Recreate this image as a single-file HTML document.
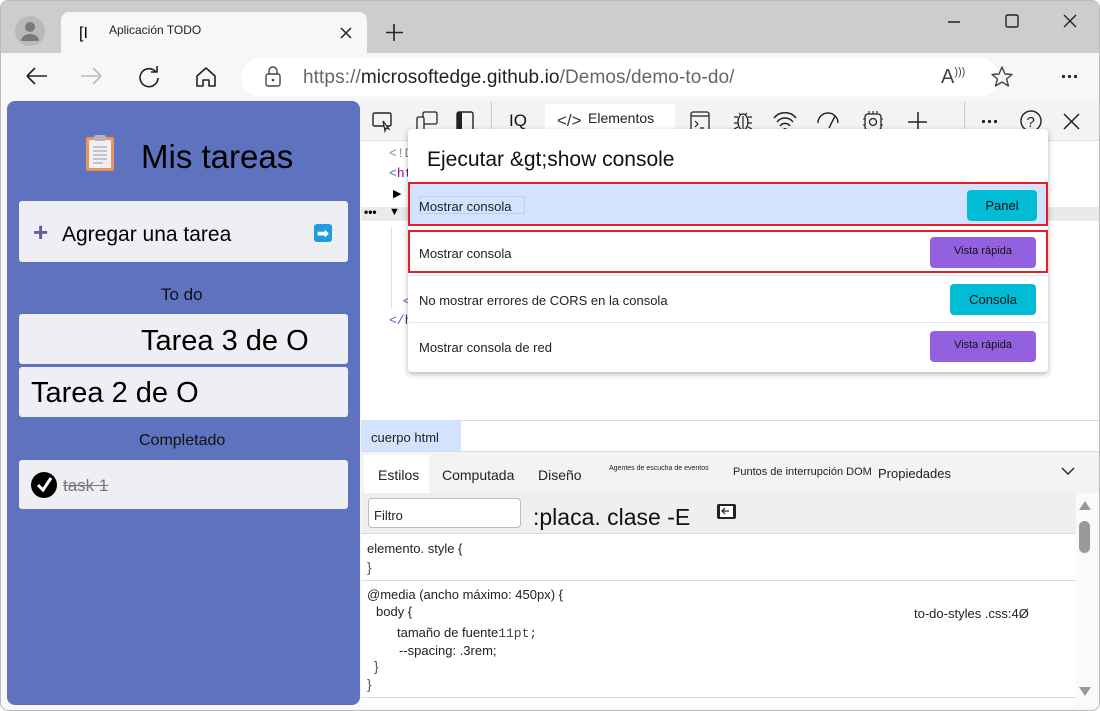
<!DOCTYPE html>
<html><head><meta charset="utf-8"><style>
*{box-sizing:border-box;margin:0;padding:0}
body{width:1100px;height:711px;background:#fff;font-family:"Liberation Sans",sans-serif;position:relative;overflow:hidden}
.a{position:absolute}
.win{left:0;top:0;width:1100px;height:711px;background:#f7f7f7;border:1px solid #bbb;border-radius:8px;overflow:hidden}
.title{left:0;top:0;width:1100px;height:52px;background:#cdcdcd}
.tab{left:60px;top:11px;width:306px;height:41px;background:#f7f7f7;border-radius:8px 8px 0 0}
.addr{left:240px;top:57px;width:758px;height:38px;background:#fff;border-radius:19px}
.panel{left:6px;top:100px;width:353px;height:604px;background:#5f72c0;border-radius:8px}
.card{background:#eeeff3;border-radius:3px;left:18px;width:329px}
.dt{left:360px;top:100px;width:738px;height:606px;background:#fff}
.btn{border-radius:4px;font-size:13px;text-align:center;color:#111}
.row{left:407px;width:640px;font-size:13px;color:#222}
svg{position:absolute;overflow:visible}
</style></head><body>
<div class="a win">
<div class="a title"></div>
<div class="a" style="left:14px;top:15px;width:30px;height:30px;border-radius:50%;background:#b9b9b9"></div>
<svg style="left:14px;top:15px" width="30" height="30"><circle cx="15" cy="11" r="5" fill="#7a7a7a"/><path d="M6 25a9 7 0 0 1 18 0z" fill="#7a7a7a"/></svg>
<div class="a tab"></div>
<div class="a" style="left:78px;top:24px;font-size:16px">[I</div>
<div class="a" style="left:108px;top:22px;font-size:12px;color:#222">Aplicación TODO</div>
<svg style="left:340px;top:27px"><path d="M0 0l10 10M10 0L0 10" stroke="#222" stroke-width="1.5"/></svg>
<svg style="left:385px;top:23px"><path d="M8 0v17M0 8.5h17" stroke="#222" stroke-width="1.6"/></svg>
<svg style="left:947px;top:20px"><path d="M0 1h12" stroke="#222" stroke-width="1.4"/></svg>
<svg style="left:1005px;top:14px"><rect x="0" y="0" width="12" height="12" rx="1.5" fill="none" stroke="#222" stroke-width="1.4"/></svg>
<svg style="left:1063px;top:14px"><path d="M0 0l12 12M12 0L0 12" stroke="#222" stroke-width="1.4"/></svg>
<svg style="left:25px;top:67px"><path d="M1 8h20M1 8l8-8M1 8l8 8" stroke="#222" stroke-width="1.6" fill="none"/></svg>
<svg style="left:80px;top:67px"><path d="M0 8h20M20 8l-8-8M20 8l-8 8" stroke="#bbb" stroke-width="1.6" fill="none"/></svg>
<svg style="left:138px;top:65px"><path d="M17 6A9 9 0 1 0 19 12M18 0v6h-6" stroke="#222" stroke-width="1.6" fill="none"/></svg>
<svg style="left:195px;top:66px"><path d="M1 9L10 1l9 8v10h-6v-6h-6v6H1z" stroke="#222" stroke-width="1.6" fill="none" stroke-linejoin="round"/></svg>
<div class="a addr"></div>
<svg style="left:264px;top:66px"><rect x="1" y="7" width="14" height="12" rx="2" fill="none" stroke="#444" stroke-width="1.4"/><path d="M4 7V4a4 4 0 0 1 8 0v3" fill="none" stroke="#444" stroke-width="1.4"/><circle cx="8" cy="13" r="1.3" fill="#444"/></svg>
<div class="a" style="left:302px;top:66px;font-size:19px;color:#222;letter-spacing:0.1px"><span style="color:#666">https://</span>microsoftedge.github.io<span style="color:#666">/Demos/demo-to-do/</span></div>
<div class="a" style="left:940px;top:65px;font-size:20px;color:#444">A<span style="font-size:11px;vertical-align:top">)))</span></div>
<svg style="left:990px;top:65px"><path d="M11 1l3 7 7 .5-5.5 4.5 2 7L11 16l-6.5 4 2-7L1 8.5 8 8z" fill="none" stroke="#444" stroke-width="1.4" stroke-linejoin="round"/></svg>
<svg style="left:1061px;top:74px"><circle cx="1.5" cy="1.5" r="1.6" fill="#222"/><circle cx="7.5" cy="1.5" r="1.6" fill="#222"/><circle cx="13.5" cy="1.5" r="1.6" fill="#222"/></svg>

<div class="a panel"></div>
<svg style="left:84px;top:134px"><rect x="1" y="2" width="28" height="34" rx="2" fill="#e9955a"/><rect x="4" y="5" width="22" height="28" fill="#f2eef5"/><rect x="9" y="0" width="12" height="6" rx="2" fill="#b9b0b8"/><path d="M8 12h14M8 16h14M8 20h14M8 24h14M8 28h10" stroke="#aaa" stroke-width="1.2"/></svg>
<div class="a" style="left:140px;top:137px;font-size:33px;color:#000">Mis tareas</div>
<div class="a card" style="top:200px;height:61px"></div>
<div class="a" style="left:32px;top:218px;font-size:26px;color:#6a5c9c;font-weight:bold;line-height:26px">+</div>
<div class="a" style="left:61px;top:222px;font-size:21px;color:#000">Agregar una tarea</div>
<div class="a" style="left:313px;top:223px;width:18px;height:18px;background:#1f9bde;border-radius:3px;color:#fff;font-size:14px;text-align:center;line-height:18px;font-weight:bold">➡</div>
<div class="a" style="left:160px;top:284px;font-size:17px;color:#111">To do</div>
<div class="a card" style="top:313px;height:50px"></div>
<div class="a" style="left:140px;top:324px;font-size:29px;color:#000">Tarea 3 de O</div>
<div class="a card" style="top:366px;height:50px"></div>
<div class="a" style="left:30px;top:376px;font-size:29px;color:#000">Tarea 2 de O</div>
<div class="a" style="left:138px;top:431px;font-size:16px;color:#111">Completado</div>
<div class="a card" style="top:459px;height:49px"></div>
<div class="a" style="left:30px;top:471px;width:26px;height:26px;border-radius:50%;background:#000"></div>
<svg style="left:30px;top:471px"><path d="M7 13l5 5 8-12" stroke="#fff" stroke-width="3" fill="none"/></svg>
<div class="a" style="left:62px;top:475px;font-size:17px;color:#777;text-decoration:line-through">task 1</div>

<div class="a dt"></div>
<div class="a" style="left:360px;top:100px;width:738px;height:40px;background:#f3f3f3;border-bottom:1px solid #ddd"></div>
<div class="a" style="left:544px;top:103px;width:130px;height:37px;background:#fff"></div>
<svg style="left:372px;top:112px"><rect x="0" y="0" width="18" height="13" rx="1.5" fill="none" stroke="#222" stroke-width="1.4"/><path d="M10 8l6 8-3-1-1 3z" fill="#fff" stroke="#222" stroke-width="1.2"/></svg>
<svg style="left:416px;top:111px"><rect x="6" y="0" width="14" height="12" rx="1.5" fill="none" stroke="#222" stroke-width="1.3"/><rect x="0" y="5" width="7" height="13" rx="1.5" fill="#f3f3f3" stroke="#222" stroke-width="1.3"/></svg>
<svg style="left:456px;top:111px"><rect x="0" y="0" width="16" height="19" rx="2" fill="none" stroke="#222" stroke-width="1.4"/><rect x="0" y="0" width="5" height="19" fill="#222"/></svg>
<div class="a" style="left:490px;top:100px;width:1px;height:30px;background:#ccc"></div>
<div class="a" style="left:508px;top:110px;font-size:17px;color:#111">IQ</div>
<div class="a" style="left:556px;top:110px;font-size:17px;color:#333">&lt;/&gt;</div>
<div class="a" style="left:587px;top:109px;font-size:14px;color:#222">Elementos</div>
<svg style="left:690px;top:111px"><rect x="0" y="0" width="18" height="19" rx="2" fill="none" stroke="#222" stroke-width="1.3"/><path d="M0 4h18M4 9l3 3-3 3M9 16h4" stroke="#222" stroke-width="1.2" fill="none"/></svg>
<svg style="left:733px;top:110px"><ellipse cx="9" cy="11" rx="5" ry="8" fill="none" stroke="#222" stroke-width="1.3"/><path d="M0 6h4M14 6h4M0 12h4M14 12h4M0 18l4-2M18 18l-4-2M5 2l2 2M13 2l-2 2M9 5v14" stroke="#222" stroke-width="1.2"/></svg>
<svg style="left:773px;top:112px"><path d="M0 5a14 14 0 0 1 22 0M3 9a10 10 0 0 1 16 0M6 13a6 6 0 0 1 10 0" stroke="#222" stroke-width="1.5" fill="none"/><circle cx="11" cy="17" r="2" fill="#222"/></svg>
<svg style="left:816px;top:112px"><path d="M1 10a10 10 0 0 1 20 0M12 15l6-12" stroke="#222" stroke-width="1.4" fill="none"/></svg>
<svg style="left:862px;top:110px"><rect x="2" y="3" width="16" height="16" rx="3" fill="none" stroke="#222" stroke-width="1.3"/><circle cx="10" cy="11" r="3.5" fill="none" stroke="#222" stroke-width="1.3"/><path d="M6 0v3M10 0v3M14 0v3M6 19v3M10 19v3M14 19v3M0 8h2M0 14h2M18 8h2M18 14h2" stroke="#222" stroke-width="1.1"/></svg>
<svg style="left:907px;top:111px"><path d="M10 0v19M0 10h19" stroke="#222" stroke-width="1.5"/></svg>
<div class="a" style="left:963px;top:100px;width:1px;height:30px;background:#ccc"></div>
<svg style="left:981px;top:119px"><circle cx="1.5" cy="1.5" r="1.6" fill="#222"/><circle cx="7.5" cy="1.5" r="1.6" fill="#222"/><circle cx="13.5" cy="1.5" r="1.6" fill="#222"/></svg>
<svg style="left:1019px;top:108px"><circle cx="11" cy="12" r="10" fill="none" stroke="#222" stroke-width="1.4"/><text x="6.5" y="18" font-size="15" font-family="Liberation Sans" fill="#222">?</text></svg>
<svg style="left:1063px;top:113px"><path d="M0 0l15 15M15 0L0 15" stroke="#222" stroke-width="1.5"/></svg>

<div class="a" style="left:360px;top:206px;width:738px;height:14px;background:#eaeaea"></div>
<div class="a" style="left:388px;top:145px;font-size:13px;color:#888;font-family:'Liberation Mono',monospace">&lt;!D</div>
<div class="a" style="left:388px;top:165px;font-size:13px;color:#881280;font-family:'Liberation Mono',monospace"><span style="color:#5a5fbf">&lt;</span>ht</div>
<div class="a" style="left:392px;top:186px;font-size:11px">▶</div>
<div class="a" style="left:363px;top:204px;font-size:12px;font-weight:bold">•••</div>
<div class="a" style="left:388px;top:205px;font-size:11px">▼</div>
<div class="a" style="left:402px;top:292px;font-size:13px;color:#5a5fbf">&lt;</div>
<div class="a" style="left:388px;top:312px;font-size:13px;color:#881280;font-family:'Liberation Mono',monospace"><span style="color:#5a5fbf">&lt;/</span>h</div>
<div class="a" style="left:390px;top:226px;width:1px;height:82px;background:#dde5f5"></div>

<div class="a" style="left:407px;top:128px;width:640px;height:243px;background:#fff;border-radius:4px;box-shadow:0 2px 6px rgba(0,0,0,.3)"></div>
<div class="a" style="left:426px;top:147px;font-size:21px;color:#111">Ejecutar &amp;gt;show console</div>
<div class="a row" style="top:181px;height:44px;background:#d3e3fd;border:2px solid #e51f2a"></div>
<div class="a" style="left:418px;top:195px;width:106px;height:18px;border:1px solid #b9cff3"></div>
<div class="a" style="left:418px;top:198px;font-size:13px;color:#222">Mostrar consola</div>
<div class="a btn" style="left:966px;top:189px;width:70px;height:31px;line-height:31px;background:#00bcd4">Panel</div>
<div class="a row" style="top:229px;height:43px;border:2px solid #e51f2a"></div>
<div class="a" style="left:418px;top:245px;font-size:13px;color:#222">Mostrar consola</div>
<div class="a btn" style="left:929px;top:236px;width:106px;height:31px;line-height:29px;background:#9361e0;font-size:11px">Vista rápida</div>
<div class="a" style="left:408px;top:274px;width:638px;height:1px;background:#dde6f5"></div>
<div class="a" style="left:418px;top:292px;font-size:13px;color:#222">No mostrar errores de CORS en la consola</div>
<div class="a btn" style="left:949px;top:283px;width:86px;height:31px;line-height:31px;background:#00bcd4">Consola</div>
<div class="a" style="left:408px;top:321px;width:638px;height:1px;background:#dde6f5"></div>
<div class="a" style="left:418px;top:339px;font-size:13px;color:#222">Mostrar consola de red</div>
<div class="a btn" style="left:929px;top:330px;width:106px;height:31px;line-height:29px;background:#9361e0;font-size:11px">Vista rápida</div>

<div class="a" style="left:360px;top:419px;width:738px;height:1px;background:#cfdcf3"></div>
<div class="a" style="left:360px;top:420px;width:100px;height:30px;background:#d3e3fd"></div>
<div class="a" style="left:370px;top:429px;font-size:13px;color:#222">cuerpo html</div>
<div class="a" style="left:360px;top:450px;width:738px;height:42px;background:#f3f3f3;border-top:1px solid #cfdcf3"></div>
<div class="a" style="left:363px;top:454px;width:65px;height:38px;background:#fff"></div>
<div class="a" style="left:377px;top:466px;font-size:14px;color:#222">Estilos</div>
<div class="a" style="left:441px;top:466px;font-size:14px;color:#222">Computada</div>
<div class="a" style="left:537px;top:466px;font-size:14px;color:#222">Diseño</div>
<div class="a" style="left:608px;top:464px;font-size:7px;color:#222">Agentes de escucha de eventos</div>
<div class="a" style="left:732px;top:465px;font-size:11px;color:#222">Puntos de interrupción DOM</div>
<div class="a" style="left:877px;top:465px;font-size:13px;color:#222">Propiedades</div>
<svg style="left:1061px;top:467px"><path d="M0 0l6 6 6-6" stroke="#222" stroke-width="1.4" fill="none"/></svg>
<div class="a" style="left:360px;top:492px;width:715px;height:41px;background:#efefef;border-bottom:1px solid #cfdcf3"></div>
<div class="a" style="left:367px;top:497px;width:153px;height:30px;background:#fff;border:1px solid #bbb;border-radius:4px"></div>
<div class="a" style="left:373px;top:507px;font-size:13px;color:#222">Filtro</div>
<div class="a" style="left:532px;top:503px;font-size:23px;color:#111">:placa. clase -E</div>
<svg style="left:716px;top:503px"><rect x="0" y="0" width="19" height="15" rx="2" fill="#222"/><rect x="3" y="2" width="13" height="11" fill="#fff"/><path d="M12 7H5M8 4L5 7l3 3" stroke="#222" stroke-width="1.2" fill="none"/></svg>
<div class="a" style="left:366px;top:540px;font-size:13px;color:#222">elemento. style {</div>
<div class="a" style="left:366px;top:558px;font-size:14px;color:#555">}</div>
<div class="a" style="left:360px;top:579px;width:715px;height:1px;background:#cfdcf3"></div>
<div class="a" style="left:366px;top:586px;font-size:13px;color:#222">@media (ancho máximo: 450px) {</div>
<div class="a" style="left:375px;top:603px;font-size:13px;color:#222">body {</div>
<div class="a" style="left:913px;top:605px;font-size:13px;color:#222">to-do-styles .css:4Ø</div>
<div class="a" style="left:396px;top:624px;font-size:13px;color:#222">tamaño de fuente<span style="font-family:'Liberation Mono',monospace;color:#444">11pt;</span></div>
<div class="a" style="left:398px;top:642px;font-size:13px;color:#222">--spacing: .3rem;</div>
<div class="a" style="left:373px;top:657px;font-size:14px;color:#555">}</div>
<div class="a" style="left:366px;top:675px;font-size:14px;color:#555">}</div>
<div class="a" style="left:360px;top:696px;width:715px;height:1px;background:#cfdcf3"></div>
<div class="a" style="left:1075px;top:492px;width:23px;height:214px;background:#fafafa"></div>
<svg style="left:1078px;top:500px"><path d="M0 9l6-9 6 9z" fill="#999"/><path d="M0 186l6 9 6-9z" fill="#999"/></svg>
<div class="a" style="left:1078px;top:520px;width:11px;height:32px;background:#999;border-radius:6px"></div>
</div>
</body></html>
